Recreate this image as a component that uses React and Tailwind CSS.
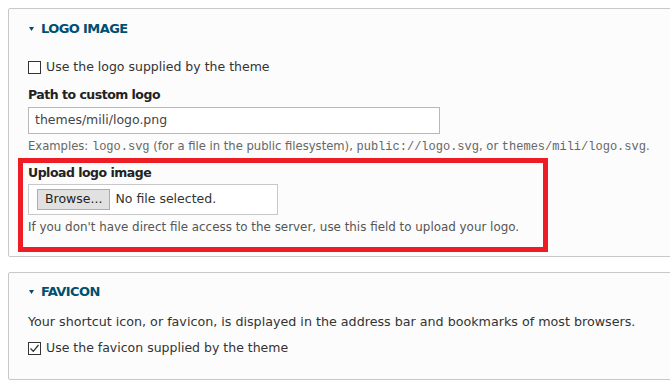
import React from 'react';

const FONT = { fontFamily: '"DejaVu Sans", "Liberation Sans", sans-serif' };
const MONO = { fontFamily: '"Liberation Mono", monospace' };

function Box({ checked }) {
  return (
    <span className="w-[13px] h-[13px] border border-[#333] bg-white flex items-center justify-center flex-shrink-0">
      {checked && (
        <svg width="11" height="11" viewBox="0 0 11 11">
          <path d="M1.5 5.5 L4.3 8.3 L9.5 2" fill="none" stroke="#333" strokeWidth="1.3" />
        </svg>
      )}
    </span>
  );
}

function Summary({ children }) {
  return (
    <div className="flex items-center h-[20px] pl-[1px] text-[#004f70] font-bold text-[13px] tracking-[-0.6px]">
      <svg width="5" height="4" viewBox="0 0 5 4" className="mr-[7px]">
        <path d="M0 0 L5 0 L2.5 4 Z" fill="#004f70" />
      </svg>
      {children}
    </div>
  );
}

export default function App() {
  return (
    <div className="w-[670px] h-[385px] overflow-hidden bg-white pt-[8px] pl-[8px] text-[#333]" style={FONT}>

      {/* Logo image */}
      <div className="w-[700px] border border-[#c8c8c8] rounded-[2px] bg-[#fcfcfc] pl-[19px] pt-[10px] pb-[4px]">
        <Summary>LOGO IMAGE</Summary>

        <label className="mt-[18px] h-[20px] flex items-center gap-[5px] text-[12.5px]">
          <Box />
          Use the logo supplied by the theme
        </label>

        <div className="mt-[9px] h-[18px] leading-[18px] font-bold text-[12.5px] tracking-[-0.5px] text-[#222]">Path to custom logo</div>
        <div className="mt-[3px] w-[412px] h-[27px] border border-[#b8b8b8] bg-white flex items-center px-[6px] text-[12.5px] text-[#444]">
          themes/mili/logo.png
        </div>

        <div className="mt-[4px] h-[16px] leading-[16px] text-[11.6px] text-[#666] whitespace-nowrap">
          Examples: <code className="text-[12px]" style={MONO}>logo.svg</code> (for a file in the public filesystem), <code className="text-[12px]" style={MONO}>public://logo.svg</code>, or <code className="text-[12px]" style={MONO}>themes/mili/logo.svg</code>.
        </div>

        {/* highlighted upload field */}
        <div className="mt-[4px] -ml-[10px] w-[530px] border-[5px] border-[#ee1d25] pl-[5px] pt-[1px] pb-[12px]">
          <div className="h-[18px] leading-[18px] font-bold text-[12.5px] tracking-[-0.5px] text-[#222]">Upload logo image</div>
          <div className="mt-[2px] w-[250px] h-[31px] border border-[#c8c8c8] bg-white flex items-center pl-[8px] gap-[5px] text-[12.5px]">
            <span className="h-[21px] px-[7px] bg-[#e1e1e1] border border-[#adadad] flex items-center text-[#222]">Browse...</span>
            <span>No file selected.</span>
          </div>
          <div className="mt-[4px] h-[16px] leading-[16px] text-[11.9px] text-[#555] whitespace-nowrap">
            If you don't have direct file access to the server, use this field to upload your logo.
          </div>
        </div>
      </div>

      {/* Favicon */}
      <div className="mt-[15px] w-[700px] border border-[#c8c8c8] rounded-[2px] bg-[#fcfcfc] pl-[19px] pt-[9px] pb-[22px]">
        <Summary>FAVICON</Summary>
        <div className="mt-[11px] h-[18px] leading-[18px] text-[12.7px]">
          Your shortcut icon, or favicon, is displayed in the address bar and bookmarks of most browsers.
        </div>
        <label className="mt-[8px] h-[18px] flex items-center gap-[5px] text-[12.5px]">
          <Box checked />
          Use the favicon supplied by the theme
        </label>
      </div>
    </div>
  );
}
